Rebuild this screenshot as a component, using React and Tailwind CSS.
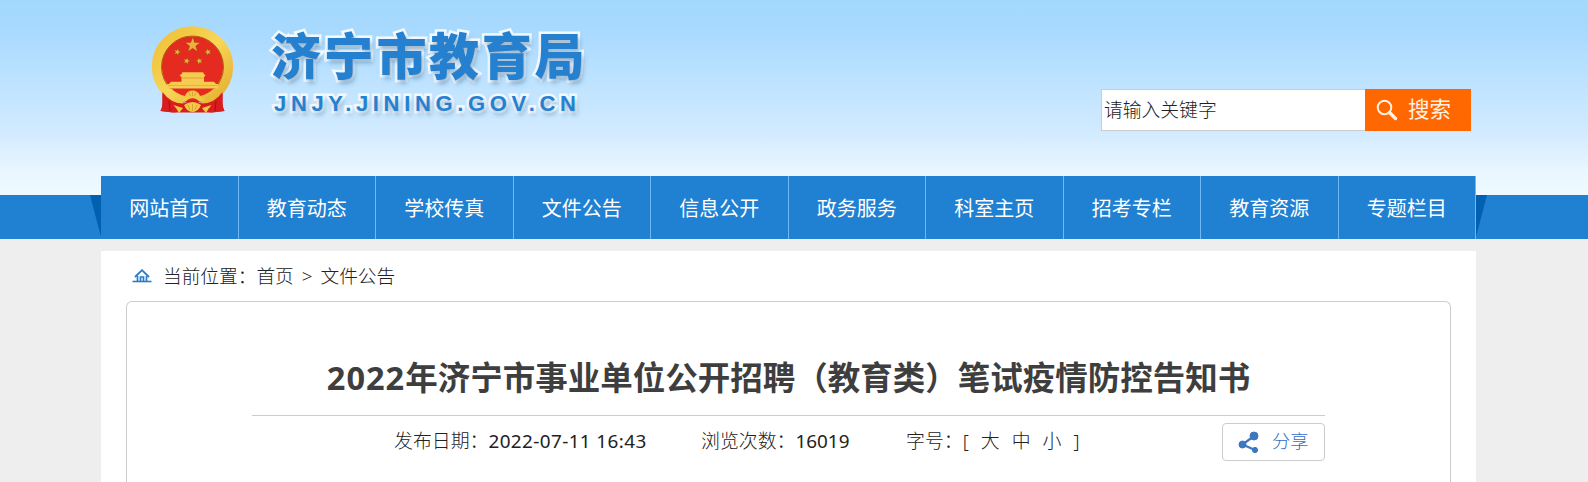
const navItems = [
  '网站首页',
  '教育动态',
  '学校传真',
  '文件公告',
  '信息公开',
  '政务服务',
  '科室主页',
  '招考专栏',
  '教育资源',
  '专题栏目',
]

const fontSizes = ['大', '中', '小']

function Star({ x, y, r, rotate = 0 }) {
  const points = Array.from({ length: 10 }, (_, i) => {
    const radius = i % 2 === 0 ? r : r * 0.4
    const angle = (Math.PI / 5) * i - Math.PI / 2
    return `${(radius * Math.cos(angle)).toFixed(2)},${(radius * Math.sin(angle)).toFixed(2)}`
  }).join(' ')
  return (
    <polygon
      points={points}
      transform={`translate(${x} ${y}) rotate(${rotate})`}
      fill="#e8b53c"
      stroke="#9c3a10"
      strokeWidth="0.4"
    />
  )
}

function Emblem() {
  return (
    <svg className="h-[90px] w-[84px] shrink-0" viewBox="0 0 84 90">
      <defs>
        <linearGradient id="gold" x1="0" y1="0" x2="1" y2="1">
          <stop offset="0" stopColor="#f0bf35" />
          <stop offset="0.5" stopColor="#f7d658" />
          <stop offset="1" stopColor="#e5ad2e" />
        </linearGradient>
      </defs>
      {/* side ribbons */}
      <path d="M11.500 56 L11.500 79 Q11 84 9.500 86 L24 87.500 L34 78 Z" fill="#c8161a" />
      <path d="M71.500 56 L71.500 79 Q72 84 73.500 86 L59 87.500 L49 78 Z" fill="#c8161a" />
      <circle cx="41.500" cy="41.500" r="36" fill="#e52b1f" />
      <path
        d="M33 76 A34.500 35.500 0 0 1 17 67.500 A35.700 35.500 0 1 1 66 67.500 A34.500 35.500 0 0 1 50 76"
        fill="none"
        stroke="url(#gold)"
        strokeWidth="10"
      />
      <circle
        cx="41.500"
        cy="42"
        r="31"
        fill="none"
        stroke="#a8600f"
        strokeWidth="0.9"
        strokeDasharray="146 49"
        transform="rotate(135 41.5 42)"
      />
      <Star x={41.700} y={20} r={8} />
      <Star x={26.300} y={27} r={4} rotate={20} />
      <Star x={57} y={27} r={4} rotate={-20} />
      <Star x={35.700} y={36} r={4} rotate={15} />
      <Star x={48.300} y={36} r={4} rotate={-15} />
      {/* gate tower */}
      <path
        d="M31.500 47.300 H52 L53 49 L54.500 50.500 L53 52 V56.700 H63 L65 59 H67 V63.500 H16 V59 H18 L20 56.700 H30.500 V52 L28.500 50.500 L30.500 49 Z"
        fill="#f5cc50"
      />
      <path d="M31 53 H52.500" stroke="#dd9a2c" strokeWidth="0.8" />
      <path d="M17 60.500 H66.500" stroke="#e2a636" strokeWidth="0.7" />
      {/* draped ribbon */}
      <path
        d="M11.500 67 Q20 79 33 78.500 Q41.500 72 50 78.500 Q63 79 71.500 67 V79 Q72 84 73.500 86 L62 87.500 H21 L9.500 86 Q11 84 11.500 79 Z"
        fill="#d91d1c"
      />
      <path d="M18 76 L19 86 M65 76 L64 86" stroke="#a30f14" strokeWidth="1" />
      {/* gears */}
      <path d="M34 71 Q36 65.500 41.500 65.500 Q47 65.500 49 71 L54 75 Q49 78 46 74.500 Q41.500 72 37 74.500 Q34 78 29 75 Z" fill="#f3c846" />
      <path d="M33 80 Q41.500 74 50 80 Q47 87 41.500 87 Q36 87 33 80 Z" fill="#f3c846" />
      <path d="M22.500 80 L32 83 L28 88 Q26 84 22.500 80 Z" fill="#f3c846" />
      <path d="M60.500 80 L51 83 L55 88 Q57 84 60.500 80 Z" fill="#f3c846" />
      <path
        d="M41.500 66.500 V71 M38 67.500 L39.500 71 M45 67.500 L43.500 71 M41.500 79 V86 M37 80 L39 85 M46 80 L44 85"
        stroke="#c98a22"
        strokeWidth="0.6"
      />
    </svg>
  )
}

function Header() {
  return (
    <header className="flex h-[176px] justify-center">
      <div className="flex w-[1375px] items-start justify-between">
        <div className="flex pt-[25px] pl-[50px]">
          <Emblem />
          <div className="pt-[1px] pl-[36px] text-[#2580d0] [paint-order:stroke_fill] [-webkit-text-stroke:5px_#f2f9ff] [text-shadow:2px_4px_4px_rgba(70,120,160,0.5)]">
            <div className="h-[62px] text-[50px] leading-[61px] font-black tracking-[2.700px]">济宁市教育局</div>
            <div className="pl-[3px] font-['Liberation_Sans',sans-serif] text-[22px] leading-[32px] font-bold tracking-[4.650px]">
              JNJY.JINING.GOV.CN
            </div>
          </div>
        </div>
        <form className="mt-[89px] mr-[5px] flex h-[42px] w-[370px]">
          <div className="flex flex-1 items-center border border-r-0 border-[#ccc] bg-white pl-[2px] text-[18.800px] font-light text-[#222]">
            请输入关键字
          </div>
          <button type="button" className="flex w-[106px] items-center bg-[#ff6700] pb-[2px] pl-[11px] text-[21.500px] text-[#fff1e6]">
            <svg className="mt-[2px] mr-[10px] h-[22px] w-[22px]" viewBox="0 0 22 22" fill="none" stroke="currentColor">
              <circle cx="8.500" cy="8.500" r="6.800" strokeWidth="2" />
              <path d="M13.500 13.500 L19.500 19.500" strokeWidth="3.400" strokeLinecap="round" />
            </svg>
            搜索
          </button>
        </form>
      </div>
    </header>
  )
}

function NavBar() {
  return (
    <div className="-mr-[11px] flex h-[63px] justify-center bg-linear-to-b from-transparent from-[19px] to-[#2080d2] to-[19px] pr-[11px]">
      <div className="relative w-[1375px]">
        <svg className="absolute top-[19px] -left-[11px] h-[44px] w-[11px]" viewBox="0 0 11 44">
          <path d="M0 0 H11 V42 Z" fill="#0160b0" />
        </svg>
        <svg className="absolute top-[19px] -right-[11px] h-[44px] w-[11px]" viewBox="0 0 11 44">
          <path d="M11 0 H0 V42 Z" fill="#0160b0" />
        </svg>
        <nav className="flex h-full bg-[#2080d2]">
          {navItems.map((item) => (
            <a
              key={item}
              className="flex flex-1 items-center justify-center border-r border-[#6fb8f5] pt-[2px] text-[20px] text-white"
            >
              {item}
            </a>
          ))}
        </nav>
      </div>
    </div>
  )
}

function Breadcrumb() {
  return (
    <div className="flex h-[50px] items-center pl-[31px] text-[18.700px] font-light text-[#222]">
      <svg className="mr-[11px] h-[14px] w-[20px]" viewBox="0 0 20 14" fill="none" stroke="#2b7cc9">
        <path d="M3 8 L10 1.200 L17 8" strokeWidth="1.800" />
        <path d="M5.500 7 V12 M14.500 7 V12 M8.500 12 V8 H11.500 V12" strokeWidth="1.700" />
        <path d="M0.500 12.500 H19.500" strokeWidth="1.600" />
      </svg>
      <span>当前位置：</span>
      <a>首页</a>
      <span className="px-[8px]">&gt;</span>
      <a>文件公告</a>
    </div>
  )
}

function ShareButton() {
  return (
    <button
      type="button"
      className="flex h-[38px] w-[103px] items-center rounded-[4px] border border-[#ccc] pb-[2px] pl-[15px] text-[18.300px] font-light text-[#2f6fc4]"
    >
      <svg className="mt-[2px] mr-[13px] h-[23px] w-[21px]" viewBox="0 0 21 23" fill="#3d77c0" stroke="#3d77c0">
        <path d="M16 5 L4.500 13.500 L17 19" fill="none" strokeWidth="2.200" />
        <circle cx="16" cy="5" r="4" />
        <circle cx="4.500" cy="13.500" r="3.500" />
        <circle cx="17" cy="19" r="2.600" />
      </svg>
      分享
    </button>
  )
}

function Article() {
  return (
    <article className="mx-[25px] h-[200px] rounded-t-[6px] border border-b-0 border-[#ccc] px-[125px] pt-[50px]">
      <h1 className="h-[64px] border-b border-[#ccc] text-center text-[32.500px] leading-[51px] font-bold whitespace-nowrap text-[#3e3e3e]">
        <span className="tracking-[1px]">2022</span>年济宁市事业单位公开招聘（教育类）笔试疫情防控告知书
      </h1>
      <div className="flex items-start pt-[7px] text-[18.900px] font-light text-[#222]">
        <div className="flex flex-1 pt-[4px] pl-[142px]">
          <span className="w-[307px]">
            发布日期：<span className="font-normal tracking-[0.400px]">2022-07-11 16:43</span>
          </span>
          <span className="w-[205px]">
            浏览次数：<span className="font-normal">16019</span>
          </span>
          <span className="flex">
            字号：[
            <span className="flex gap-[12px] px-[12px]">
              {fontSizes.map((size) => (
                <a key={size}>{size}</a>
              ))}
            </span>
            ]
          </span>
        </div>
        <ShareButton />
      </div>
    </article>
  )
}

export default function App() {
  return (
    <div className="h-[482px] overflow-hidden bg-[#eee] font-['Noto_Sans','Noto_Sans_CJK_SC',sans-serif]">
      <div className="bg-[linear-gradient(to_bottom,#a3d8fd_0,#a8d9ff_30px,#bbe2ff_75px,#d1eaff_130px,#e8f6ff_170px,#eefaff_195px)] pr-[11px]">
        <Header />
        <NavBar />
      </div>
      <main className="mt-[12px] ml-[101px] w-[1375px] bg-white">
        <Breadcrumb />
        <Article />
      </main>
    </div>
  )
}
